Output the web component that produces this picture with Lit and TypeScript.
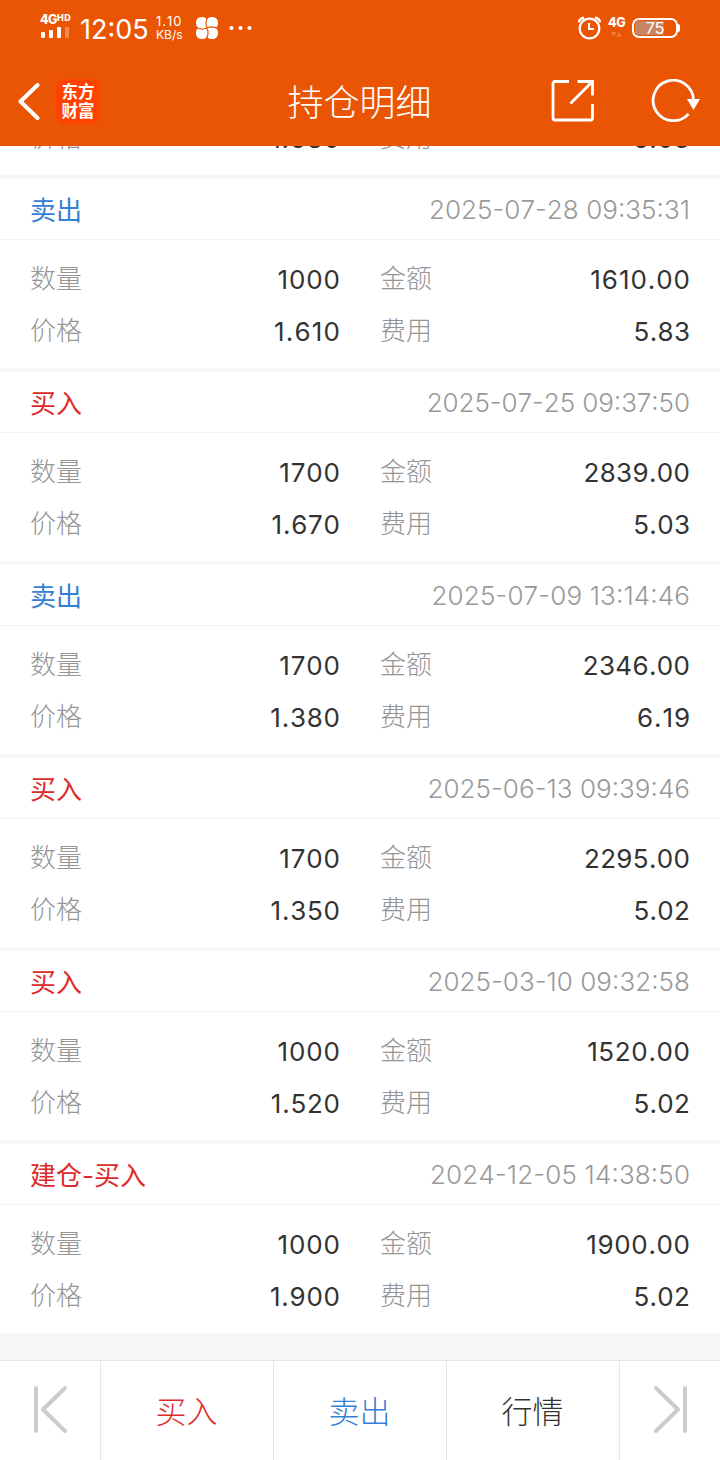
import { LitElement, html, css, svg, nothing } from "lit";
import { customElement, property } from "lit/decorators.js";
import { classMap } from "lit/directives/class-map.js";
import { styleMap } from "lit/directives/style-map.js";

interface Trade {
  side?: "buy" | "sell";
  label?: string;
  time?: string;
  qty?: string;
  amount?: string;
  price: string;
  fee: string;
}

const TRADES: Trade[] = [
  { price: "1.680", fee: "5.03" },
  { side: "sell", label: "卖出", time: "2025-07-28 09:35:31", qty: "1000", amount: "1610.00", price: "1.610", fee: "5.83" },
  { side: "buy", label: "买入", time: "2025-07-25 09:37:50", qty: "1700", amount: "2839.00", price: "1.670", fee: "5.03" },
  { side: "sell", label: "卖出", time: "2025-07-09 13:14:46", qty: "1700", amount: "2346.00", price: "1.380", fee: "6.19" },
  { side: "buy", label: "买入", time: "2025-06-13 09:39:46", qty: "1700", amount: "2295.00", price: "1.350", fee: "5.02" },
  { side: "buy", label: "买入", time: "2025-03-10 09:32:58", qty: "1000", amount: "1520.00", price: "1.520", fee: "5.02" },
  { side: "buy", label: "建仓-买入", time: "2024-12-05 14:38:50", qty: "1000", amount: "1900.00", price: "1.900", fee: "5.02" },
];

// Narrow "1" glyphs get their missing width back as tracking over the whole number.
const tracking = (text: string, base: number, perOne: number) => {
  const ls = base + ((text.split("1").length - 1) * perOne) / text.length;
  return styleMap({ letterSpacing: `${ls.toFixed(3)}px`, marginRight: `${(-ls).toFixed(3)}px` });
};

@customElement("status-bar")
class StatusBar extends LitElement {
  static styles = css`
    :host { display: flex; height: 56px; padding: 0 40px; justify-content: space-between; box-sizing: border-box; color: #fff; font-family: Inter, sans-serif; }
    .side { display: flex; align-items: flex-start; }
    .net { width: 32px; padding-top: 12px; }
    .gen { display: flex; font-size: 12.500px; font-weight: 800; line-height: 15px; letter-spacing: -0.5px; }
    .hd { font-size: 9px; line-height: 12px; letter-spacing: 0.4px; }
    .bars { display: block; }
    .clock { width: 75px; margin-left: 8px; padding-top: 13px; font-size: 27px; line-height: 33px; white-space: nowrap; }
    .speed { width: 39px; margin-left: 1px; padding-top: 15px; font-size: 12px; line-height: 13px; white-space: nowrap; }
    .rate { letter-spacing: 1px; font-size: 13px; font-kerning: none; }
    .unit { letter-spacing: 0; }
    .clover { margin-top: 16px; }
    .dots { margin: 25px 0 0 10px; }
    .alarm { margin-top: 15px; }
    .data { width: 24px; margin-left: 6px; padding-top: 15px; }
    .data .gen { line-height: 16px; letter-spacing: -0.3px; }
    .arrows { display: block; margin: 0 0 0 2px; }
    .battery { display: flex; align-items: center; margin-top: 18px; }
    .shell { display: flex; width: 46px; height: 20px; box-sizing: border-box; border: 2px solid #fff; border-radius: 7px; padding: 1px; }
    .level { flex: 1; display: flex; align-items: center; justify-content: center; border-radius: 4px; background: linear-gradient(90deg, #c98561 73%, transparent 73%); font-size: 16.500px; line-height: 14px; font-weight: 400; }
    .cap { width: 2px; height: 8px; border-radius: 0 2px 2px 0; background: #fff; }
  `;
  render() {
    return html`
      <div class="side">
        <div class="net">
          <div class="gen">4G<span class="hd">HD</span></div>
          <svg class="bars" width="30" height="12" fill="#fff">
            <rect x="1" y="5" width="4" height="6" rx="1"/><rect x="9" y="3" width="4" height="8" rx="1"/>
            <rect x="17" y="0" width="4" height="11" rx="1"/><rect x="25" y="-1" width="4" height="12" rx="1" opacity=".3"/>
          </svg>
        </div>
        <div class="clock">12:05</div>
        <div class="speed"><div class="rate">1.10</div><div class="unit">KB/s</div></div>
        <svg class="clover" width="24" height="24" viewBox="0 0 24 24">
          <g fill="#fff"><rect x="1" y="1" width="12" height="12" rx="5.500"/><rect x="11" y="1" width="12" height="12" rx="5.500"/><rect x="1" y="11" width="12" height="12" rx="5.500"/><rect x="11" y="11" width="12" height="12" rx="5.500"/><rect x="7" y="7" width="10" height="10"/></g>
          <path d="M1 11Q6 14.500 12 12M13 1Q9.500 6 12 12M23 13Q18 9.500 12 12M11 23Q14.500 18 12 12" fill="none" stroke="#ea5504" stroke-width="1.200"/>
        </svg>
        <svg class="dots" width="24" height="6" fill="#fff"><circle cx="2.500" cy="3" r="2.100"/><circle cx="11.500" cy="3" r="2.100"/><circle cx="20.500" cy="3" r="2.100"/></svg>
      </div>
      <div class="side">
        <svg class="alarm" width="25" height="26" viewBox="0 0 25 26" fill="none" stroke="#fff">
          <circle cx="12.500" cy="13.500" r="9.800" stroke-width="2.200"/><path d="M12 8v6h5" stroke-width="2"/>
          <path d="M2.200 6.200Q3 3.500 6 2.900M22.800 6.200Q22 3.500 19 2.900" stroke-width="2.600" stroke-linecap="round"/>
        </svg>
        <div class="data">
          <div class="gen">4G</div>
          <svg class="arrows" width="14" height="7" fill="#f07a3c"><path d="M1 1h5.500L3.700 6zM6.500 6h5.500L9.300 1z"/></svg>
        </div>
        <div class="battery"><div class="shell"><div class="level">75</div></div><div class="cap"></div></div>
      </div>`;
  }
}

@customElement("title-bar")
class TitleBar extends LitElement {
  static styles = css`
    :host { display: grid; grid-template-columns: 1fr auto 1fr; height: 90px; align-items: center; color: #fff; }
    .left { display: flex; align-items: center; padding-left: 17px; }
    .brand { display: flex; flex-direction: column; align-items: center; justify-content: center; width: 44px; height: 45px; margin-left: 16px; border-radius: 8px; background: #ff4200; font: 700 16.500px/19px "Noto Sans CJK SC", sans-serif; }
    .title { font: 300 36px/52px "Noto Sans CJK SC", sans-serif; margin: 0 1px 2px 0; }
    .right { display: flex; justify-content: flex-end; padding-right: 20px; gap: 57px; }
  `;
  render() {
    return html`
      <div class="left">
        <svg width="23" height="40" viewBox="0 0 23 40"><path d="M20.500 4L3.500 20.500L20.500 37" fill="none" stroke="#fff" stroke-width="4" stroke-linecap="round" stroke-linejoin="round"/></svg>
        <div class="brand"><span>东方</span><span>财富</span></div>
      </div>
      <div class="title">持仓明细</div>
      <div class="right">
        <svg width="44" height="44" viewBox="0 0 44 44" fill="none" stroke="#fff" stroke-width="2.800"><path d="M19 2.500H5Q3 2.500 3 4.500V39Q3 41 5 41H40.500Q42.500 41 42.500 39V25M27.500 2.500H42.500V16.500M42 3L20.500 24.500"/></svg>
        <svg width="49" height="44" viewBox="0 0 49 44" fill="none" stroke="#fff" stroke-width="2.800"><path d="M37.500 34.800A20.200 20.200 0 1 1 42.500 21"/><path d="M36 20h13l-6.500 11z" fill="#fff" stroke="none"/></svg>
      </div>`;
  }
}

@customElement("trade-card")
class TradeCard extends LitElement {
  static styles = css`
    :host { display: block; flex: none; border-top: 4px solid #f6f7f9; background: #fff; font-family: Inter, "Noto Sans CJK SC", sans-serif; font-size: 26px; }
    .head { display: flex; justify-content: space-between; align-items: center; height: 60px; padding: 0 30px; border-bottom: 1px solid #f3f3f3; }
    .side { font-weight: 400; line-height: 36px; padding-top: 3px; }
    .buy { color: #dd2a2a; }
    .sell { color: #3480d5; }
    .time { color: #999; font-weight: 300; line-height: 36px; padding-top: 2px; white-space: nowrap; font-kerning: none; font-feature-settings: "case" 1; }
    .body { display: grid; grid-template-columns: 310px 310px; column-gap: 40px; grid-auto-rows: 52px; padding: 12px 30px; }
    .cell { display: flex; justify-content: space-between; align-items: center; line-height: 36px; }
    .name { color: #959595; font-weight: 300; padding-top: 1px; }
    .value { color: #333; font-weight: 400; padding-top: 4px; font-kerning: none; }
  `;
  @property({ attribute: false }) trade!: Trade;

  cell(name: string, value: string) {
    return html`<div class="cell"><span class="name">${name}</span><span class="value" style=${tracking(value, 0.35, 2.1)}>${value}</span></div>`;
  }
  render() {
    const t = this.trade;
    return html`
      ${t.time ? html`<div class="head">
        <span class=${classMap({ side: true, buy: t.side === "buy", sell: t.side === "sell" })}>${t.label}</span>
        <span class="time" style=${tracking(t.time, -0.06, 2)}>${t.time}</span>
      </div>` : nothing}
      <div class="body">
        ${t.qty && t.amount ? [this.cell("数量", t.qty), this.cell("金额", t.amount)] : nothing}
        ${this.cell("价格", t.price)}${this.cell("费用", t.fee)}
      </div>`;
  }
}

@customElement("app-root")
class AppRoot extends LitElement {
  static styles = css`
    :host { display: flex; flex-direction: column; width: 720px; height: 1460px; overflow: hidden; background: #f6f7f9; }
    .top { flex: none; background: #ea5504; }
    .list { flex: 1; min-height: 0; display: flex; flex-direction: column; justify-content: flex-end; overflow: hidden; padding-bottom: 27px; }
    .nav { flex: none; display: grid; grid-template-columns: 100px 173px 173px 173px 101px; height: 100px; box-sizing: border-box; border-top: 1px solid #e6e6e6; background: #fff; font: 300 31px/46px "Noto Sans CJK SC", sans-serif; }
    .item { display: flex; align-items: center; justify-content: center; border-left: 1px solid #e6e6e6; padding: 0 1px 1px 0; }
    .edge { padding-right: 0; }
    .first { border-left: none; }
    .buy { color: #dd2a2a; }
    .sell { color: #3480d5; }
    .quote { color: #333; }
  `;
  arrow(path: string) {
    return svg`<svg width="36" height="50" viewBox="0 0 36 50" fill="none" stroke="#ccc" stroke-width="4" stroke-linecap="round" stroke-linejoin="round"><path d=${path}/></svg>`;
  }
  render() {
    return html`
      <div class="top"><status-bar></status-bar><title-bar></title-bar></div>
      <div class="list">${TRADES.map((t) => html`<trade-card .trade=${t}></trade-card>`)}</div>
      <div class="nav">
        <div class="item edge first">${this.arrow("M4 3V46M33 3L11 24.500L33 46")}</div>
        <div class="item buy">买入</div>
        <div class="item sell">卖出</div>
        <div class="item quote">行情</div>
        <div class="item edge">${this.arrow("M33 3V46M4 3L26 24.500L4 46")}</div>
      </div>`;
  }
}
